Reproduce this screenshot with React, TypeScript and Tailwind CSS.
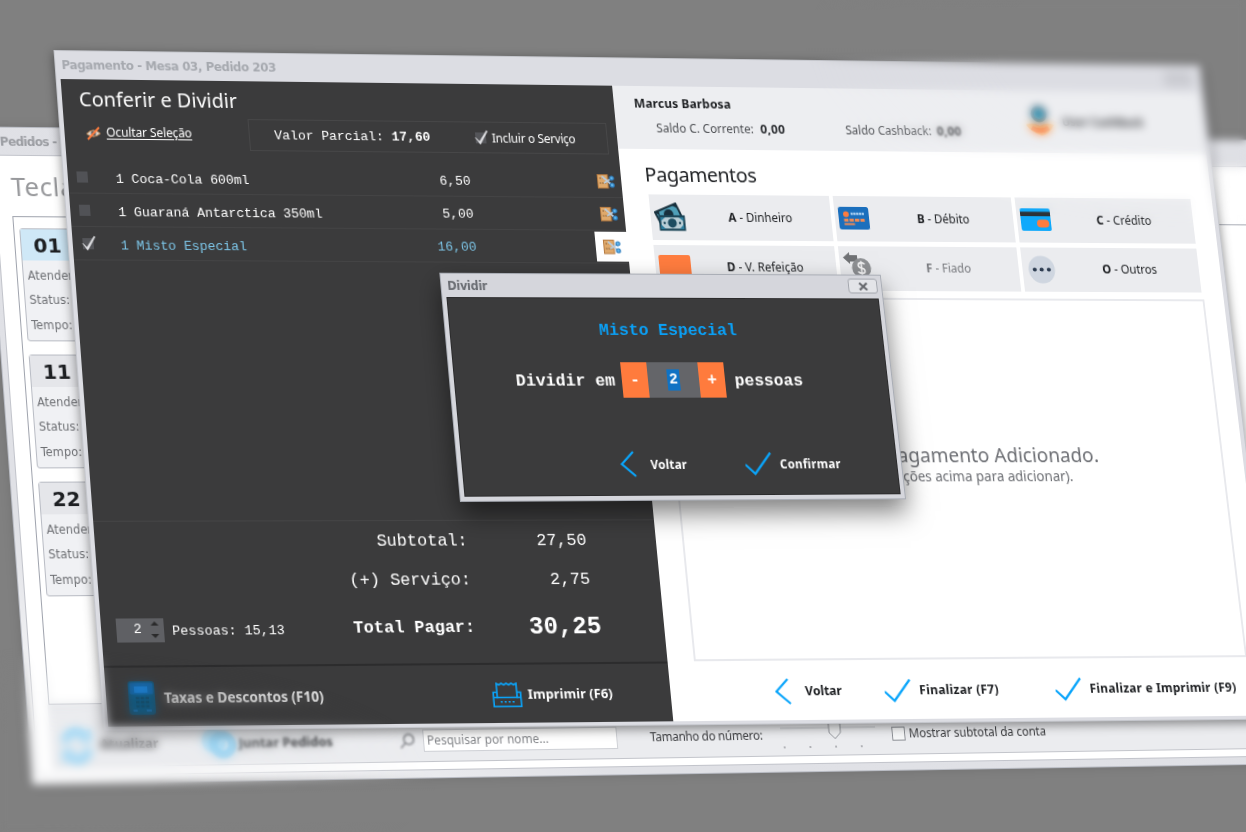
import React from "react";

type Point = [number, number];

/** CSS matrix3d that maps a w x h box onto the quad tl, tr, br, bl. */
function project(w: number, h: number, quad: [Point, Point, Point, Point]): React.CSSProperties {
  const [[x0, y0], [x1, y1], [x2, y2], [x3, y3]] = quad;
  const ax = x1 - x2, ay = y1 - y2, bx = x3 - x2, by = y3 - y2;
  const sx = x0 - x1 + x2 - x3, sy = y0 - y1 + y2 - y3;
  const den = ax * by - bx * ay;
  const g = (sx * by - bx * sy) / den;
  const k = (ax * sy - sx * ay) / den;
  const m = [
    (x1 - x0 + g * x1) / w, (y1 - y0 + g * y1) / w, 0, g / w,
    (x3 - x0 + k * x3) / h, (y3 - y0 + k * y3) / h, 0, k / h,
    0, 0, 1, 0,
    x0, y0, 0, 1,
  ];
  return { transform: `matrix3d(${m.map((n) => n.toFixed(9)).join(",")})` };
}

const sans = "font-['Noto_Sans',sans-serif]";
const mono = "font-['Liberation_Mono',monospace]";

/* ---------- icons ---------- */

const Chevron = () => (
  <svg className="h-[26px] w-4 shrink-0" viewBox="0 0 16 26" fill="none" stroke="#0aa5fb" strokeWidth="2.2">
    <path d="M14 1 L1.5 13 L15 25" />
  </svg>
);

const Tick = () => (
  <svg className="h-[24px] w-[28px] shrink-0" viewBox="0 0 28 24" fill="none" stroke="#0aa5fb" strokeWidth="2.3">
    <path d="M0 13 L9.5 22 L27 1.5" />
  </svg>
);

const CheckMark = () => (
  <svg className="h-4 w-[15px] shrink-0" viewBox="0 0 15 16">
    <rect x="1" y="3" width="11" height="11" fill="#545559" />
    <path d="M1 8.2 L5 12.2 L12.8 1.2 L13.8 1.8 L5.6 15Z" fill="#e2e3e6" stroke="#e2e3e6" strokeWidth="0.6" />
  </svg>
);

const EyeOff = () => (
  <svg className="h-4 w-4 shrink-0" viewBox="0 0 16 16" fill="none">
    <path d="M1 8.5 Q8 1.5 15 8 Q8 14 1 8.5Z" fill="#d9d4cc" stroke="#b98352" strokeWidth="1" />
    <circle cx="8" cy="8" r="2.5" fill="#55575c" />
    <path d="M2 14 L14 2" stroke="#ff7c3e" strokeWidth="2" />
  </svg>
);

const SplitIcon = () => (
  <svg className="h-[15px] w-[18px]" viewBox="0 0 18 15">
    <rect x="0.5" y="0.5" width="10.5" height="13.5" fill="#dfa96b" stroke="#b67b41" />
    <path d="M2.5 4h3M2.5 9h7" stroke="#7b5530" strokeDasharray="1.6 1" />
    <path d="M5 2 L14.5 10.5 M7 9 L14.5 4.5" stroke="#b9cbdc" strokeWidth="1.7" />
    <circle cx="15.2" cy="4" r="2" fill="#5fb4ea" stroke="#2e7fc0" strokeWidth="1.2" />
    <circle cx="15.2" cy="11" r="2" fill="#5fb4ea" stroke="#2e7fc0" strokeWidth="1.2" />
  </svg>
);

const CalculatorIcon = () => (
  <svg className="h-8 w-[26px] shrink-0" viewBox="0 0 26 32">
    <rect width="26" height="32" rx="3" fill="#12597f" />
    <rect x="1.5" y="1.5" width="23" height="11" rx="1.5" fill="#1566a8" />
    <rect x="6" y="5" width="13" height="6" fill="#1f7fd0" />
    <path d="M7 16h13M7 20h13M7 24h13" stroke="#17455c" strokeWidth="2.4" strokeDasharray="3.5 1.3" />
    <path d="M4 28h4M17 28h5" stroke="#1f78c4" strokeWidth="2" />
  </svg>
);

const PrinterIcon = () => (
  <svg className="h-6 w-[30px] shrink-0" viewBox="0 0 30 24" fill="none" stroke="#0aa5fb" strokeWidth="1.6">
    <path d="M5 14.5V1l2.5 1.3 2.5-1.3 2.5 1.3 2.5-1.3 2.5 1.3 2.5-1.3 2.5 1.3 2.5-1.3v13.5z" />
    <path d="M5 9.5H1.2V23.2h27.6V9.5H25M1 14.5h5M24.5 14.5H29" />
    <path d="M8 18.7h15" strokeDasharray="2 2" />
  </svg>
);

const CashIcon = () => (
  <svg className="h-[29px] w-[32px]" viewBox="0 0 32 29">
    <path d="M1 10 L23 1 L30 18 L8 26Z" fill="#4f9fb8" stroke="#18303d" strokeWidth="2" />
    <circle cx="15" cy="12" r="5" fill="#18303d" />
    <path d="M19 3l4-1.6 2 4.6zM1 10l4-1.5.8 5z" fill="#18303d" />
    <rect x="5.5" y="14" width="25" height="13.5" fill="#b9ced6" stroke="#1c4658" strokeWidth="2.2" />
    <path d="M6 19v-4h5zM25 15h5v4zM6 22v5h5zM30 22v5h-5z" fill="#2c7c9b" />
    <circle cx="18" cy="20.8" r="4.6" fill="#1d4d61" />
    <circle cx="10" cy="20.8" r="1.2" fill="#1c4658" />
    <circle cx="26" cy="20.8" r="1.2" fill="#1c4658" />
  </svg>
);

const DebitIcon = () => (
  <svg className="h-[23px] w-[32px]" viewBox="0 0 32 23">
    <rect width="32" height="23" rx="2.5" fill="#1b6fbd" />
    <circle cx="8" cy="7.5" r="3" fill="#ff7c3e" />
    <path d="M13 7h14" stroke="#a6cdf0" strokeWidth="2.6" strokeDasharray="2.4 0.5" />
    <path d="M5.5 13.5h22" stroke="#f08a55" strokeWidth="2.8" strokeDasharray="4.5 1.2" />
    <path d="M5.5 17.5h11" stroke="#f08a55" strokeWidth="2" />
  </svg>
);

const CreditIcon = () => (
  <svg className="h-[23px] w-[32px]" viewBox="0 0 32 23">
    <rect width="32" height="23" rx="2" fill="#0fa9fb" />
    <rect y="3.5" width="32" height="4.5" fill="#2c3238" />
    <rect x="17" y="11.5" width="13" height="8" rx="4" fill="#ff7c3e" />
  </svg>
);

const MealIcon = () => (
  <svg className="h-[33px] w-[33px]" viewBox="0 0 33 33">
    <rect y="4" width="33" height="29" rx="2" fill="#ff7c3e" />
  </svg>
);

const CreditBackIcon = () => (
  <svg className="h-[32px] w-[32px]" viewBox="0 0 32 32">
    <path d="M0 5.5 L7 0 V3 H15 V8 L11 9.5 H7 V12Z" fill="#6f7174" />
    <circle cx="18.5" cy="16" r="10" fill="#8d8f92" />
    <path d="M22 12.3q-1.2-1.6-3.5-1.6-3.2 0-3.2 2.5 0 2.2 3.2 2.8 3.4.5 3.4 2.9 0 2.4-3.4 2.4-2.6 0-3.8-1.8M18.5 8.8v14.4" fill="none" stroke="#f1f1f2" strokeWidth="1.7" />
  </svg>
);

const DotsIcon = () => (
  <svg className="h-[29px] w-[29px]" viewBox="0 0 29 29">
    <circle cx="14.5" cy="14.5" r="14" fill="#cfd6e0" />
    <circle cx="7" cy="14.5" r="2.1" fill="#2d3c50" />
    <circle cx="14.5" cy="14.5" r="2.1" fill="#2d3c50" />
    <circle cx="22" cy="14.5" r="2.1" fill="#2d3c50" />
  </svg>
);

const CashbackIcon = () => (
  <svg className="mt-[-2px] h-[33px] w-[30px] shrink-0" viewBox="0 0 30 33">
    <circle cx="15" cy="9" r="8.5" fill="#3c5d70" />
    <circle cx="15" cy="9" r="5" fill="#35b0d4" />
    <path d="M0 20 Q7 17 15 21 Q23 17 30 20 Q24 30 16 31 Q5 28 0 20Z" fill="#fbbd6c" />
    <path d="M6 23 Q15 29 24 23" stroke="#ff6a2a" strokeWidth="5" fill="none" />
  </svg>
);

/* ---------- background window ---------- */

function TableCard({ id, active = false }: { id: string; active?: boolean }) {
  return (
    <div className="h-[112px] w-[190px] rounded-[3px] border border-[#b9bcc4] bg-[#f0f1f4] text-[12.5px] text-[#6d6f73]">
      <div className={`flex h-[31px] items-center pl-[12px] font-['DejaVu_Sans',sans-serif] text-[20px] font-bold text-[#1d1f22] ${active ? "bg-[#cfe8f7]" : "bg-[#e5e6ea]"}`}>
        {id}
      </div>
      <div className="flex flex-col pt-[3px] pl-[4px] leading-[24.4px] font-['DejaVu_Sans_Condensed','DejaVu_Sans',sans-serif]">
        <span className="tracking-[0.1px]">Atendente:</span>
        <span className="tracking-[0.1px]">Status:</span>
        <span className="tracking-[0.1px]">Tempo:</span>
      </div>
    </div>
  );
}

function OrdersWindow() {
  return (
    <section
      className={`absolute top-0 left-0 flex h-[645px] w-[1480px] origin-top-left flex-col border border-[#b9bcc4] bg-linear-to-tr from-white via-[#e0e1e6] via-20% to-[#dfe0e5] px-[5px] pb-[7px] shadow-[0_0_10px_rgba(0,0,0,0.12)] ${sans}`}
      style={project(1480, 645, [[-16.3, 126.5], [1380, 141], [1450, 761.6], [32, 785]])}
    >
      <header className="flex h-[27px] shrink-0 items-center justify-between pl-[9px]">
        <span className="font-['DejaVu_Sans',sans-serif] text-[12px] font-bold tracking-[-0.65px] text-[#9b9da2]">Pedidos -</span>
        <span className="mr-[184px] text-[12px] text-[#85878c]">✕</span>
      </header>
      <div className="flex min-h-0 flex-1 flex-col border border-[#c2c4cb] bg-white pb-[7px]">
        <h2 className="flex h-[60px] shrink-0 items-center pl-4 text-[26px] tracking-[0.6px] text-[#98999c]">Teclado</h2>
        <div className="ml-[15px] flex flex-1 flex-col gap-[13px] border border-[#9fa3ad] pt-[11px] pl-[5px]">
          <TableCard id="01" active />
          <TableCard id="11" />
          <TableCard id="22" />
        </div>
        <footer className="ml-[14px] flex h-[61px] shrink-0 items-center border-b border-[#c3c5cb] bg-[#ebecef] pt-[19px] pl-[8px] text-[12px] text-[#3a3b3e]">
          <svg className="h-[38px] w-[36px] blur-[1px]" viewBox="0 0 36 38" fill="none" stroke="#a3d9f6" strokeWidth="9">
            <path d="M7 16a11 11 0 0 1 20-6M29 22a11 11 0 0 1-20 6" />
            <path d="M31 3v11H21M5 35V24h10" strokeWidth="4" />
          </svg>
          <span className="ml-[5px] w-[100px] text-[12.5px] font-bold tracking-[0.2px] text-[#2c2d30] blur-[0.6px]">Atualizar</span>
          <svg className="h-[34px] w-[36px] blur-[0.8px]" viewBox="0 0 36 34">
            <circle cx="13" cy="14" r="12" fill="#b5dff5" />
            <circle cx="22" cy="18" r="9.5" fill="none" stroke="#97d2f1" strokeWidth="8" />
          </svg>
          <span className="ml-[2px] w-[162px] text-[13px] font-bold text-[#1d1f22] blur-[1.4px]">Juntar Pedidos</span>
          <svg className="h-4 w-4 blur-[1px]" viewBox="0 0 16 16" fill="none" stroke="#77797e" strokeWidth="1.5">
            <circle cx="9.5" cy="6.5" r="5" />
            <path d="M6 10l-5 5" />
          </svg>
          <span className="ml-[8px] flex h-[22px] w-[199px] items-center border border-[#cfd1d6] bg-white pl-[3px] tracking-[0.05px] text-[#85878b] blur-[0.7px]">Pesquisar por nome...</span>
          <span className="ml-[34px] w-[136px] tracking-[-0.25px]">Tamanho do número:</span>
          <svg className="h-[32px] w-[100px]" viewBox="0 0 100 32">
            <path d="M0 9h100" stroke="#c6c8cd" />
            <path d="M51 4v10l6 6 6-6V4z" fill="#eeeff1" stroke="#909399" />
            <path d="M3 27v2M30 27v2M57 27v2M84 27v2" stroke="#77797e" />
          </svg>
          <span className="ml-[17px] h-[14px] w-[14px] border border-[#8c8f95] bg-[#f6f7f8]" />
          <span className="ml-[4px]">Mostrar subtotal da conta</span>
        </footer>
      </div>
    </section>
  );
}

/* ---------- payment window: left pane ---------- */

const items = [
  { name: "1 Coca-Cola 600ml", price: "6,50", selected: false },
  { name: "1 Guaraná Antarctica 350ml", price: "5,00", selected: false },
  { name: "1 Misto Especial", price: "16,00", selected: true },
];

function ItemRow({ name, price, selected }: (typeof items)[number]) {
  return (
    <li className="flex h-[33px] items-center border-b border-[#444445]">
      <span className="flex w-[48px] items-center pl-[9px]">
        {selected ? <CheckMark /> : <span className="h-[11px] w-[11px] bg-[#515256]" />}
      </span>
      <span className={`w-[280px] pt-[5px] tracking-[-0.05px] ${selected ? "text-[#7cc4e6]" : "text-white"}`}>{name}</span>
      <span className={`w-[81px] pt-[4px] text-right ${selected ? "text-[#7cc4e6]" : "text-white"}`}>{price}</span>
      <span className="flex-1" />
      <span className={`flex h-[30px] w-[33px] items-center pl-[8px] ${selected ? "bg-white" : ""}`}>
        <SplitIcon />
      </span>
    </li>
  );
}

function HideSelectionButton() {
  return (
    <button className="flex w-[186px] items-center pl-[21px] text-[12px]">
      <EyeOff />
      <span className="-mt-[2px] ml-[5px] tracking-[-0.1px] underline underline-offset-2">Ocultar Seleção</span>
    </button>
  );
}

function ReviewPane() {
  return (
    <div className="flex w-[565px] shrink-0 flex-col bg-[#3b3b3c] text-white">
      <h1 className="flex h-[38px] items-center pt-[1px] pl-[17px] text-[20px] tracking-[0.02px]">Conferir e Dividir</h1>
      <div className="flex h-[32px] items-center">
        <HideSelectionButton />
        <div className="flex h-full w-[369px] items-center border border-[#474748] pl-[25px]">
          <span className={`w-[205px] pt-[2px] text-[13.3px] ${mono}`}>
            Valor Parcial: <b>17,60</b>
          </span>
          <CheckMark />
          <span className="ml-[3px] pt-[2px] text-[12px] tracking-[-0.2px]">Incluir o Serviço</span>
        </div>
      </div>
      <ul className={`mt-[11px] flex flex-1 flex-col text-[13.3px] ${mono}`}>
        {items.map((item) => (
          <ItemRow key={item.name} {...item} />
        ))}
      </ul>
      <div className={`h-[139px] border-t border-[#454546] text-[17px] ${mono}`}>
        <div className="flex h-[39px] items-center">
          <span className="w-[373px] text-right">Subtotal:</span>
          <span className="w-[121px] text-right">27,50</span>
        </div>
        <div className="flex h-[38px] items-center">
          <span className="w-[373px] text-right">(+) Serviço:</span>
          <span className="w-[121px] text-right">2,75</span>
        </div>
        <div className="flex h-[54px] items-center">
          <span className="ml-[15px] flex h-[23px] w-[47px] items-center justify-between bg-[#5f6064] pr-[5px] pl-[17px] text-[13.3px]">
            2
            <svg className="h-[18px] w-[8px]" viewBox="0 0 8 18" fill="#2a2a2b">
              <path d="M0 5l4-4 4 4zM0 13l4 4 4-4z" />
            </svg>
          </span>
          <span className="w-[119px] pt-[3px] pl-[8px] text-[13.3px] whitespace-nowrap">Pessoas: 15,13</span>
          <b className="w-[192px] text-right">Total Pagar:</b>
          <b className="w-[128px] text-right text-[24.5px]">30,25</b>
        </div>
      </div>
      <div className="flex h-[58px] items-center border-t-2 border-[#2c2c2d] pt-[2px] text-[13px] font-bold">
        <span className="ml-[22px]"><CalculatorIcon /></span>
        <span className="ml-[9px] w-[327px] text-[13.5px] text-[#e6e6e6] blur-[0.6px]">Taxas e Descontos (F10)</span>
        <PrinterIcon />
        <span className="ml-[6px] tracking-[0.1px]">Imprimir (F6)</span>
      </div>
    </div>
  );
}

/* ---------- payment window: right pane ---------- */

const methods = [
  { shortcut: "A", label: "Dinheiro", icon: <CashIcon /> },
  { shortcut: "B", label: "Débito", icon: <DebitIcon /> },
  { shortcut: "C", label: "Crédito", icon: <CreditIcon /> },
  { shortcut: "D", label: "V. Refeição", icon: <MealIcon /> },
  { shortcut: "F", label: "Fiado", icon: <CreditBackIcon />, muted: true },
  { shortcut: "O", label: "Outros", icon: <DotsIcon /> },
];

function PaymentsPane() {
  return (
    <div className="flex flex-1 flex-col bg-white text-[#1d1f22]">
      <div className="flex h-[64px] bg-[#edeef1] text-[12px]">
        <div className="w-[434px] pt-[9px] pl-[21px]">
          <p className="h-[18px] text-[12.5px] leading-[18px] font-bold tracking-[0.15px]">Marcus Barbosa</p>
          <p className="mt-[7px] flex h-[18px] pl-[21px] leading-[18px] text-[#4c4e52]">
            <span className="w-[109px] tracking-[0.05px]">Saldo C. Corrente:</span>
            <b className="w-[90px] text-[12.5px] tracking-[0.3px] text-[#2b2d31]">0,00</b>
            <span className="w-[97px] blur-[0.6px]">Saldo Cashback:</span>
            <b className="text-[12.5px] tracking-[0.3px] text-[#2b2d31] blur-[1px]">0,00</b>
          </p>
        </div>
        <div className="flex items-center">
          <CashbackIcon />
          <span className="ml-[9px] font-bold text-[#44464a] blur-[0.5px]">Usar CashBack</span>
        </div>
      </div>
      <h2 className="flex h-[46px] items-center pt-[4px] pl-[25px] text-[20.5px] tracking-[-0.45px]">Pagamentos</h2>
      <div className="ml-[27px] grid w-[575px] grid-cols-3 gap-x-1 gap-y-[5px]">
        {methods.map((m) => (
          <button key={m.shortcut} className="flex h-[45.5px] items-center bg-[#ebecef] text-[12px]">
            <span className="flex w-10 justify-center">{m.icon}</span>
            <span className={`flex-1 ${m.muted ? "text-[#77797d]" : ""}`}>
              <b>{m.shortcut}</b> - {m.label}
            </span>
          </button>
        ))}
      </div>
      <div className="mt-[7px] ml-[27px] flex h-[360px] w-[577px] flex-col items-center justify-center border-2 border-[#e8e9ed] text-[#6c6e73]">
        <p className="mt-[-26px] text-[20px] leading-[24px]">Nenhum Pagamento Adicionado.</p>
        <p className="mr-[10px] text-[14px] leading-[18px]">(Utilize as opções acima para adicionar).</p>
      </div>
      <div className="flex flex-1 items-center pt-[2px] pl-[107px] text-[12.5px] font-bold">
        <Chevron />
        <span className="ml-[15px] w-[82px]">Voltar</span>
        <Tick />
        <span className="ml-[8px] w-[142px] tracking-[0.3px]">Finalizar (F7)</span>
        <Tick />
        <span className="ml-[8px] tracking-[0.25px] whitespace-nowrap">Finalizar e Imprimir (F9)</span>
      </div>
    </div>
  );
}

function PaymentWindow() {
  return (
    <section
      className={`absolute top-0 left-0 flex h-[664px] w-[1200px] origin-top-left flex-col border border-[#c5c7cd] bg-[#dcdde3] px-1 pb-[3px] shadow-[0_3px_10px_rgba(0,0,0,0.45)] ${sans}`}
      style={project(1200, 664, [[53.5, 50], [1200, 65], [1279, 719.5], [103.5, 731]])}
    >
      <header className="flex h-[28px] shrink-0 items-center justify-between pr-[6px] pl-[2px]">
        <span className="font-['DejaVu_Sans',sans-serif] text-[12px] font-bold tracking-[-0.43px] text-[#a6a9af]">Pagamento - Mesa 03, Pedido 203</span>
        <span className="h-[16px] w-[30px] rounded-[3px] bg-[#cacbd1] blur-[2px]" />
      </header>
      <div className="flex min-h-0 flex-1">
        <ReviewPane />
        <PaymentsPane />
      </div>
    </section>
  );
}

/* ---------- split dialog ---------- */

function SplitDialog() {
  return (
    <section
      className={`absolute top-0 left-0 flex h-[224px] w-[460px] origin-top-left flex-col border border-[#a9adb5] bg-[#d5d6dc] px-1 pb-1 text-white shadow-[0_12px_24px_rgba(0,0,0,0.5)] ${sans}`}
      style={project(460, 224, [[439.3, 272.7], [880.7, 274.7], [906, 499.3], [460, 502]])}
    >
      <header className="flex h-[23px] shrink-0 items-center justify-between pl-[2px]">
        <span className="pt-[2px] font-['DejaVu_Sans',sans-serif] text-[11.5px] font-bold tracking-[-0.3px] text-[#6b6e74]">Dividir</span>
        <span className="mt-[-2px] flex h-[15px] w-[31px] items-center justify-center rounded-[3px] border border-[#a3a6ad] bg-[#e3e4e8]">
          <svg className="h-[8px] w-[10px]" viewBox="0 0 10 8" stroke="#65676c" strokeWidth="2.2">
            <path d="M1 0.5l8 7M9 0.5l-8 7" />
          </svg>
        </span>
      </header>
      <div className="flex flex-1 flex-col border border-[#2b2b2c] bg-[#3b3b3c]">
        <p className={`mt-[21px] text-center text-[17px] leading-[22px] font-bold text-[#0aa0f6] ${mono}`}>Misto Especial</p>
        <div className={`mt-[20px] flex h-[35px] items-center pl-[62px] text-[17px] font-bold ${mono}`}>
          <span className="w-[109px] pt-[3px]">Dividir em</span>
          <span className="flex h-full w-[27px] items-center justify-center bg-[#ff7b3d]">-</span>
          <span className="flex h-full w-[53px] items-center justify-center bg-[#646569] text-[15px]">
            <span className="bg-[#0f72c4] px-[1.5px] leading-[21px]">2</span>
          </span>
          <span className="flex h-full w-[27px] items-center justify-center bg-[#ff7b3d]">+</span>
          <span className="ml-[10px] pt-[3px]">pessoas</span>
        </div>
        <div className="mt-[49px] flex h-[32px] items-center pl-[161px] text-[12px] font-bold">
          <Chevron />
          <span className="ml-[15px] w-[98px] pt-[2px] tracking-[0.2px]">Voltar</span>
          <Tick />
          <span className="ml-[8px] pt-[2px] tracking-[0.3px]">Confirmar</span>
        </div>
      </div>
    </section>
  );
}

export default function App() {
  return (
    <main className="relative h-[832px] w-[1246px] overflow-hidden bg-[#808080]">
      <OrdersWindow />
      <PaymentWindow />
      <SplitDialog />
      <div className="pointer-events-none absolute top-0 right-0 h-[240px] w-[640px] backdrop-blur-[4px] [mask-image:radial-gradient(ellipse_75%_90%_at_95%_20%,black_45%,transparent_85%)]" />
      <div className="pointer-events-none absolute bottom-0 left-0 h-[220px] w-[620px] backdrop-blur-[4px] [mask-image:radial-gradient(ellipse_75%_65%_at_3%_75%,black_30%,transparent_90%)]" />
    </main>
  );
}
